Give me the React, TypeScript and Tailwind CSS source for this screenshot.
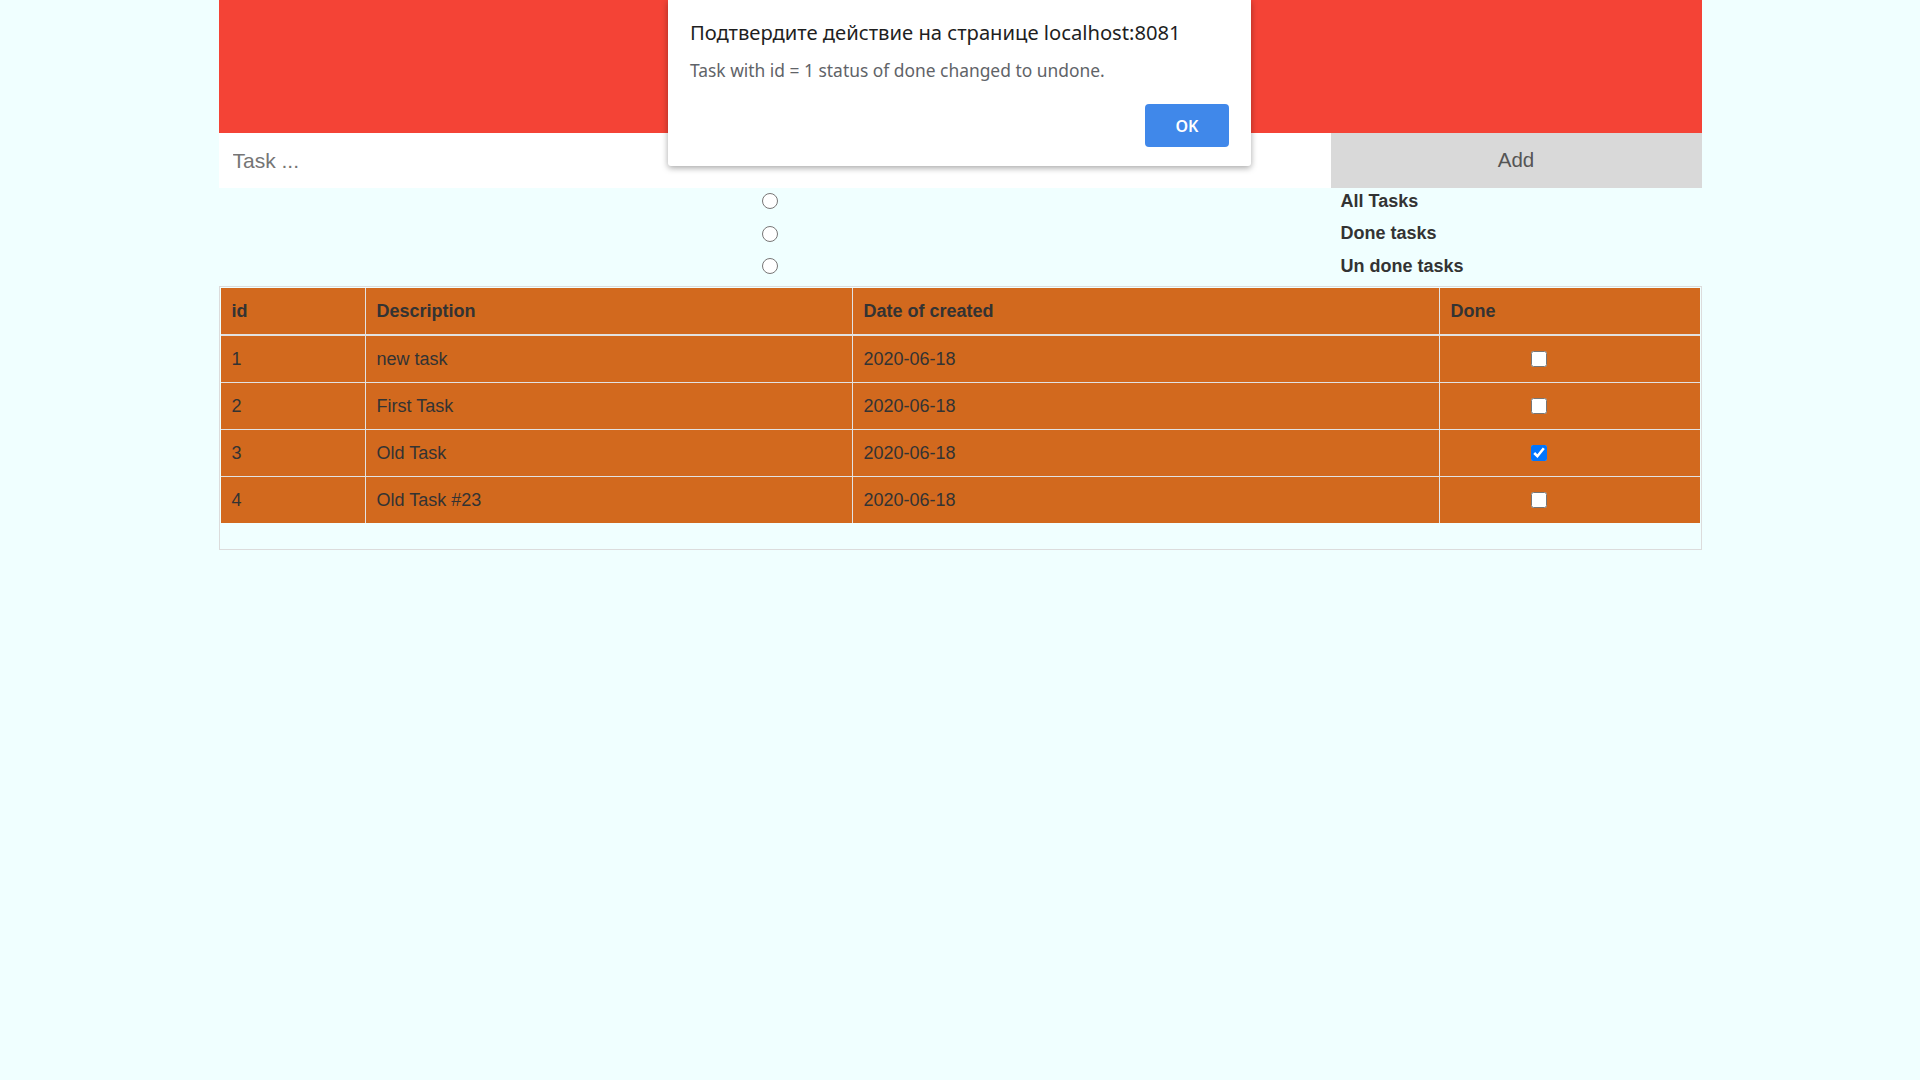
import React from 'react';

interface Task {
  id: number;
  description: string;
  created: string;
  done: boolean;
}

const tasks: Task[] = [
  { id: 1, description: 'new task', created: '2020-06-18', done: false },
  { id: 2, description: 'First Task', created: '2020-06-18', done: false },
  { id: 3, description: 'Old Task', created: '2020-06-18', done: true },
  { id: 4, description: 'Old Task #23', created: '2020-06-18', done: false },
];

const filters = ['All Tasks', 'Done tasks', 'Un done tasks'];

function ConfirmDialog() {
  return (
    <div
      className="absolute left-[668px] top-0 w-[583px] bg-white rounded-b-[3px] shadow-[0_2px_6px_rgba(0,0,0,0.35)] px-[22px] pt-[19px] pb-[19px]"
      style={{ fontFamily: '"Noto Sans", "Open Sans", sans-serif' }}
    >
      <div className="h-[26px] text-[20.2px] leading-[26px] text-[#1f1f1f]">
        Подтвердите действие на странице localhost:8081
      </div>
      <div className="mt-[14px] h-[22px] text-[17.4px] leading-[22px] text-[#5f6368]">
        Task with id = 1 status of done changed to undone.
      </div>
      <div className="mt-[23px] flex justify-end">
        <button className="w-[84px] h-[43px] rounded-[4px] bg-[#4088ea] text-white text-[16px] font-semibold">
          OK
        </button>
      </div>
    </div>
  );
}

export default function App() {
  return (
    <div
      className="relative min-h-[1080px] bg-[#f0ffff] text-[#333]"
      style={{ fontFamily: '"Liberation Sans", Arial, sans-serif' }}
    >
      <div className="mx-auto w-[1483px]">
        {/* header */}
        <div className="h-[133px] bg-[#f44336]" />

        {/* new task */}
        <div className="flex h-[55px]">
          <input
            className="w-[1112px] h-full bg-white px-[14px] text-[21px] outline-none placeholder:text-[#757575]"
            placeholder="Task ..."
          />
          <button className="flex-1 h-full bg-[#d9d9d9] text-[20.5px] text-[#555]">Add</button>
        </div>

        {/* filters */}
        <div className="flex flex-col gap-y-[6.5px] pb-[7px]">
          {filters.map((f) => (
            <div key={f} className="flex h-[26px] items-center">
              <div className="w-[1112px] flex justify-center pr-[10px]">
                <input type="radio" name="filter" className="w-[16px] h-[16px] m-0" />
              </div>
              <label className="pl-[10px] text-[18px] font-bold text-[#333]">{f}</label>
            </div>
          ))}
        </div>

        {/* table */}
        <div className="border border-[#dcdcdc] p-[1px] pb-[26px]">
          <div className="grid grid-cols-[144px_486px_586px_1fr] gap-[1px] bg-[#e2e2e2] text-[18px]">
            {['id', 'Description', 'Date of created', 'Done'].map((h) => (
              <div key={h} className="h-[46px] mb-[1px] flex items-center px-[11px] bg-[#d2691e] font-bold">
                {h}
              </div>
            ))}
            {tasks.map((t) => (
              <React.Fragment key={t.id}>
                <div className="h-[46px] flex items-center px-[11px] bg-[#d2691e]">{t.id}</div>
                <div className="h-[46px] flex items-center px-[11px] bg-[#d2691e]">{t.description}</div>
                <div className="h-[46px] flex items-center px-[11px] bg-[#d2691e]">{t.created}</div>
                <div className="h-[46px] flex items-center pl-[91px] bg-[#d2691e]">
                  <input
                    type="checkbox"
                    checked={t.done}
                    readOnly
                    className="w-[16px] h-[16px] m-0 accent-[#0075ff]"
                  />
                </div>
              </React.Fragment>
            ))}
          </div>
        </div>
      </div>

      <ConfirmDialog />
    </div>
  );
}
